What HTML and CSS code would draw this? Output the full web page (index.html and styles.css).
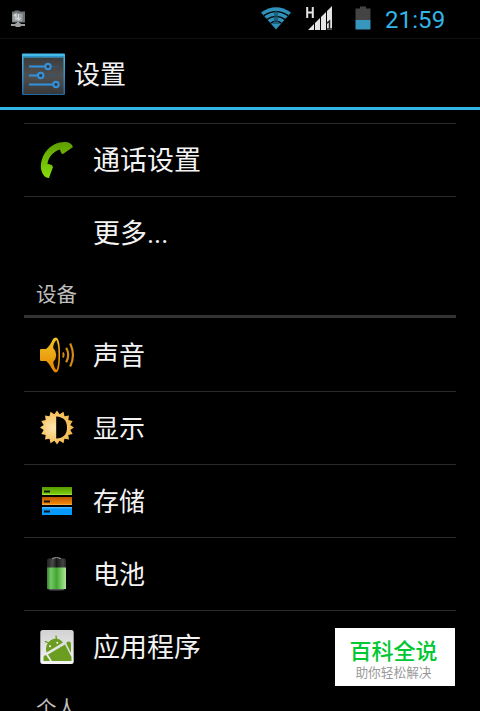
FILE: index.html
```html
<!DOCTYPE html>
<html lang="zh-CN">
<head>
<meta charset="utf-8">
<title>设置</title>
<link rel="stylesheet" href="styles.css">
</head>
<body>

<div class="statusbar">
  <svg class="notify" width="16" height="18" viewBox="0 0 16 18">
    <path d="M2 1.500h2l1-1h4l1 1h5v11H2z" fill="#6d7274"/>
    <path d="M2.500 3.500h10v8h-10z" fill="#9a9fa2"/>
    <path d="M4 6l2-2v6M8.500 4v6M7 8l1.500 2L10.500 8" fill="none" stroke="#d5d8d9" stroke-width="1.200"/>
    <path d="M7 12h2v2H7zM1 14h14v2H1zM5.500 13h5v4h-5z" fill="#9b9fa2"/>
  </svg>
  <svg class="wifi" width="32" height="24" viewBox="0 0 32 24">
    <path d="M16 23.500L1 6.500Q16-4.200 31 6.500z" fill="#2f91ba"/>
    <path d="M3.800 9.600Q16 1.500 28.200 9.600M7 13.400Q16 7.200 25 13.400M10.500 17.200Q16 13.200 21.500 17.200" fill="none" stroke="#000" stroke-width="1.300"/>
    <path d="M16 4l2 3v8l2 3h-8l2-3V7z" fill="#17536c" opacity=".75"/>
  </svg>
  <svg class="signal" width="27" height="26" viewBox="0 0 27 26">
    <path d="M1.200 1v11M6.800 1v11M1 6.500h6" fill="none" stroke="#e4e4e4" stroke-width="2"/>
    <path d="M2 24l6-6v6zM9 17l5-5v12H9zM15 11l5-5v18h-5zM21 5l5-5v24h-5z" fill="#e4e4e4"/>
    <path d="M20.500 17.500l3-2.500v8M21 23h5" fill="none" stroke="#222" stroke-width="1.500"/>
  </svg>
  <svg class="level" width="16" height="24" viewBox="0 0 16 24">
    <path d="M0.500 2.500H5V0.500h6v2h4.500V14H.5z" fill="#444"/>
    <path d="M.5 14h15v9.500H.5z" fill="#3796bd"/>
  </svg>
  <span class="clock">21:59</span>
</div>

<div class="header">
  <svg width="44" height="44" viewBox="0 0 44 44">
    <defs>
      <linearGradient id="panel" x1="0" y1="0" x2="0" y2="1"><stop offset="0" stop-color="#3c3c3c"/><stop offset=".5" stop-color="#505050"/><stop offset="1" stop-color="#383838"/></linearGradient>
      <linearGradient id="rim" x1="0" y1="0" x2="0" y2="1"><stop offset="0" stop-color="#48bdea"/><stop offset="1" stop-color="#1d69a8"/></linearGradient>
    </defs>
    <rect x="1" y=".5" width="43" height="41.500" rx="1" fill="url(#rim)"/>
    <path d="M2.500 4.500h40V41h-40z" fill="url(#panel)"/>
    <path d="M1.500 3.800h42" stroke="#2487bd"/>
    <path d="M8 13.500h30M8 22.500h30M8 31.500h30" stroke="#34536c" stroke-width="1.500"/>
    <path d="M8 13.500h16M8 22.500h9M8 31.500h24" stroke="#3292dd" stroke-width="1.800"/>
    <g fill="#353f47" stroke="#3292dd" stroke-width="2"><circle cx="27" cy="13.500" r="2.700"/><circle cx="19.700" cy="22.500" r="2.700"/><circle cx="35" cy="31.500" r="2.700"/></g>
  </svg>
  <h1>设置</h1>
</div>

<div class="list">
  <div class="row">
    <svg class="icon" width="36" height="40" viewBox="0 0 36 40">
      <defs><linearGradient id="phone" x1="0" y1="0" x2="0" y2="1"><stop offset="0" stop-color="#5e9d00"/><stop offset="1" stop-color="#83dc0b"/></linearGradient></defs>
      <path d="M1 29C0 15 10 2 25 2Q31 2 33 7L23 14Q21 14 20 9.500C14 11 8 17 7.500 24Q12 24 13 27L9 38Q3 38 1 29z" fill="url(#phone)"/>
    </svg>
    <span class="label">通话设置</span>
  </div>
  <div class="row">
    <span class="icon"></span>
    <span class="label">更多...</span>
  </div>

  <h2>设备</h2>

  <div class="row">
    <svg class="icon" width="36" height="40" viewBox="0 0 36 40">
      <defs><linearGradient id="horn" x1="0" y1="0" x2="0" y2="1"><stop offset="0" stop-color="#f2c526"/><stop offset="1" stop-color="#e58300"/></linearGradient></defs>
      <path d="M0 15Q0 14 1 14H6Q10 11 13 4Q14 2.500 16 2.500Q20 3 20 20T16 37.500Q14 37.500 12 34Q9 28 6 26H1Q0 26 0 25z" fill="url(#horn)"/>
      <path d="M16.400 5Q13.200 8 13.200 13Q16.200 16 16.200 20T13.200 27Q14 33 16.400 35Q18.500 31 18.500 20T16.400 5z" fill="#120b00"/>
      <path d="M23 17.500q1.300 2.500 0 5" fill="none" stroke="#cf8510" stroke-width="2"/>
      <path d="M26.200 12.800q4 7 0 14.400M30.200 8.500q5.500 11.500 0 23" fill="none" stroke="#d48c17" stroke-width="2.200"/>
    </svg>
    <span class="label short">声音</span>
  </div>
  <div class="row">
    <svg class="icon" width="36" height="40" viewBox="0 0 36 40">
      <defs><radialGradient id="sun" cx=".4" cy=".5" r=".6"><stop offset="0" stop-color="#ffe8b4"/><stop offset="1" stop-color="#f3b33d"/></radialGradient></defs>
      <path d="M17 2.500L19.600 6.200L23.500 3.800L24.500 8.200L29 7.500L28.300 12L32.700 13L30.300 16.900L34 19.500L30.300 22.100L32.700 26L28.300 27L29 31.500L24.500 30.800L23.500 35.200L19.600 32.800L17 36.500L14.400 32.800L10.500 35.200L9.500 30.800L5 31.500L5.700 27L1.300 26L3.700 22.100L0 19.500L3.700 16.900L1.300 13L5.700 12L5 7.500L9.500 8.200L10.500 3.800L14.400 6.200z" fill="url(#sun)"/>
      <path d="M16.200 8.500Q27 9 27 19.500T16.200 30.500z" fill="#050300"/>
    </svg>
    <span class="label short">显示</span>
  </div>
  <div class="row">
    <svg class="icon" width="36" height="40" viewBox="0 0 36 40">
      <defs>
        <linearGradient id="disk1" x1="0" y1="0" x2="0" y2="1"><stop offset="0" stop-color="#559b00"/><stop offset=".8" stop-color="#79c80b"/><stop offset="1" stop-color="#b0ee57"/></linearGradient>
        <linearGradient id="disk2" x1="0" y1="0" x2="0" y2="1"><stop offset="0" stop-color="#bd5800"/><stop offset=".8" stop-color="#f08200"/><stop offset="1" stop-color="#ffb75f"/></linearGradient>
        <linearGradient id="disk3" x1="0" y1="0" x2="0" y2="1"><stop offset="0" stop-color="#66c3ff"/><stop offset=".25" stop-color="#0b98fa"/><stop offset="1" stop-color="#009cff"/></linearGradient>
      </defs>
      <path d="M2 6h30v8H2z" fill="url(#disk1)"/>
      <path d="M2 16h30v8H2z" fill="url(#disk2)"/>
      <path d="M2 26h30v8H2z" fill="url(#disk3)"/>
      <path d="M4 10.500h6M4 20.500h6M4 30.500h6" stroke="#111" stroke-width="2"/>
    </svg>
    <span class="label short">存储</span>
  </div>
  <div class="row">
    <svg class="icon" width="36" height="40" viewBox="0 0 36 40">
      <defs>
        <linearGradient id="cell"><stop offset="0" stop-color="#37812c"/><stop offset=".2" stop-color="#75c968"/><stop offset=".5" stop-color="#43a532"/><stop offset=".85" stop-color="#8bd876"/><stop offset="1" stop-color="#b5df9b"/></linearGradient>
        <linearGradient id="cap"><stop offset="0" stop-color="#222"/><stop offset=".3" stop-color="#4a4a4a"/><stop offset=".5" stop-color="#181818"/><stop offset=".85" stop-color="#444"/><stop offset="1" stop-color="#222"/></linearGradient>
      </defs>
      <path d="M7 6Q7 4.500 9 4.500H12Q13 3 16.500 3T21 4.500H24Q26 4.500 26 6V14H7z" fill="url(#cap)"/>
      <path d="M12 4.500Q16.500 2.500 21 4.500" fill="none" stroke="#999"/>
      <path d="M7 13.500h19V35H7z" fill="url(#cell)"/>
      <path d="M8 35h17l-2 1.500H10z" fill="#555"/>
    </svg>
    <span class="label short">电池</span>
  </div>
  <div class="row">
    <svg class="icon" width="36" height="40" viewBox="0 0 36 40">
      <defs><linearGradient id="tile" x1="0" y1="0" x2="0" y2="1"><stop offset="0" stop-color="#d2d2d2"/><stop offset="1" stop-color="#f4f4f4"/></linearGradient></defs>
      <rect x=".3" y="3" width="33.400" height="34" rx="2.500" fill="url(#tile)"/>
      <g fill="#6b9d20">
        <path d="M6.500 25.500Q4.500 17 11 13T23 15.500z"/>
        <path d="M8 27.500L25 17.500L31.500 30V34H12z"/>
        <path d="M26.500 17Q26 14.500 28.500 14.500T31 16.500V26z"/>
        <path d="M3.500 30Q4 27.500 6.500 28.500L10 34H3.500z"/>
      </g>
      <path d="M9 16L4.800 14.300M16.500 13L16 8.500" stroke="#6b9d20" stroke-width="1.300"/>
      <circle cx="10" cy="19.300" r="1" fill="#fff"/><circle cx="17.300" cy="15.800" r="1" fill="#fff"/>
    </svg>
    <span class="label">应用程序</span>
  </div>

  <h2>个人</h2>
</div>

<div class="stamp">
  <strong>百科全说</strong>
  <small>助你轻松解决</small>
</div>

</body>
</html>
```
FILE: styles.css
```css
* {
  box-sizing: border-box;
}

body {
  margin: 0;
  height: 711px;
  overflow: hidden;
  background: #000;
  color: #f3f3f3;
  font-family: Roboto, "Noto Sans CJK SC", sans-serif;
}

svg {
  display: block;
  flex: none;
}

.statusbar {
  display: flex;
  align-items: flex-start;
  height: 39px;
  padding: 6px 0 0 10px;
  border-bottom: 1px solid #111;
}

.notify {
  margin-top: 4px;
}

.wifi {
  margin-left: 234px;
}

.signal {
  margin-left: 14px;
}

.level {
  margin-left: 22px;
}

.clock {
  margin-left: 14px;
  color: #33b5e5;
  font-size: 24px;
  line-height: 28px;
  letter-spacing: 0.1px;
}

.header {
  display: flex;
  align-items: center;
  height: 71px;
  padding: 3px 0 0 21px;
  border-bottom: 3px solid #33b5e5;
}

h1 {
  margin: 0 0 0 9px;
  font-size: 26px;
  font-weight: normal;
  line-height: 40px;
}

.list {
  padding: 13px 24px 0;
}

.row {
  display: flex;
  align-items: center;
  height: 73px;
  padding-left: 16px;
  border-top: 1px solid #2b2b2b;
  font-size: 27px;
}

.icon {
  width: 36px;
  margin-right: 17px;
}

.label {
  padding-bottom: 4px;
}

.short {
  font-size: 26px;
}

h2 {
  height: 49px;
  margin: 0;
  padding: 11px 0 0 12px;
  border-bottom: 3px solid #333;
  color: #bebebe;
  font-size: 20.5px;
  font-weight: normal;
  line-height: 30px;
}

h2 + .row {
  border-top-color: transparent;
}

.stamp {
  position: absolute;
  left: 335px;
  top: 628px;
  display: flex;
  flex-direction: column;
  align-items: center;
  width: 120px;
  height: 58px;
  padding: 10px 3px 0 0;
  background: #fff;
}

.stamp strong {
  color: #00c832;
  font-size: 22px;
  font-weight: 500;
  line-height: 27px;
}

.stamp small {
  color: #999;
  font-size: 12.7px;
  line-height: 15px;
}
```
